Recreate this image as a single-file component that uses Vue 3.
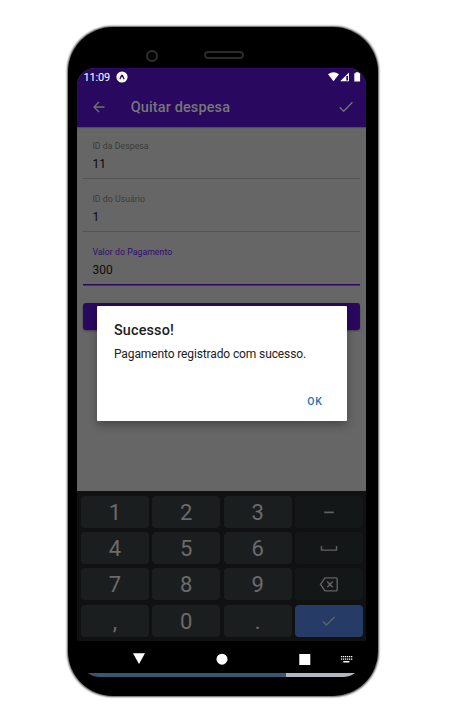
<script setup>
const fields = [
  { label: 'ID da Despesa', value: '11' },
  { label: 'ID do Usuário', value: '1' },
  { label: 'Valor do Pagamento', value: '300', focused: true },
]
const keys = ['1', '2', '3', 'minus', '4', '5', '6', 'space', '7', '8', '9', 'delete', ',', '0', '.', 'done']
const dots = [0, 1, 2, 3, 4, 5]
</script>

<template>
  <main class="page">
    <div class="phone">
      <div class="bezel">
        <span class="camera"></span>
        <span class="speaker"></span>
      </div>
      <div class="screen">
        <header class="top">
          <div class="status">
            <span class="clock">11:09</span>
            <svg class="expo" viewBox="0 0 12 12"><circle cx="6" cy="6" r="5.6" fill="#fff" /><path d="M4.1 7.7 5.6 4.4Q6 3.8 6.4 4.4L7.9 7.7" fill="none" stroke="#29085f" stroke-width="1.3" stroke-linecap="round" /></svg>
            <svg class="signals" viewBox="0 0 33 10">
              <path d="M0 2.2Q5.5-1.8 11 2.2L5.5 9.2Z" fill="#fff" />
              <path d="M12.2 9.3 21 .4V9.3Z" fill="#fff" />
              <path d="M18.3 4H20v4.5H18.3Z" fill="#29085f" />
              <path d="M27.6.3h3.2v1h1.3v8.2h-5.8V1.3h1.3Z" fill="#fff" />
            </svg>
          </div>
          <div class="appbar">
            <svg class="back" viewBox="0 0 12 12"><path d="M11.5 6H1M6 1 1 6l5 5" /></svg>
            <h1>Quitar despesa</h1>
            <svg class="confirm" viewBox="0 0 13 11"><path d="M.6 5.8 4.3 9.4 12.5 1" /></svg>
          </div>
        </header>
        <section class="form">
          <div v-for="f in fields" :key="f.label" class="field" :class="{ focused: f.focused }">
            <label>{{ f.label }}</label>
            <span class="value">{{ f.value }}</span>
          </div>
          <div class="submit"></div>
        </section>
        <section class="keyboard">
          <div v-for="k in keys" :key="k" class="key" :class="k.length > 1 ? k : (k === ',' || k === '.') ? 'mark' : ''">
            <svg v-if="k === 'minus'" class="glyph" viewBox="0 0 20 16"><path d="M5.2 8.4h9.6" /></svg>
            <svg v-else-if="k === 'space'" class="glyph" viewBox="0 0 20 16"><path d="M2.5 6v4.1h15V6" /></svg>
            <svg v-else-if="k === 'delete'" class="glyph" viewBox="0 0 20 16"><path d="M6 1.9h11.2q1 0 1 1v11q0 1-1 1H6L1.5 8.4ZM8.2 5.6l5.6 5.6M13.8 5.6l-5.6 5.6" /></svg>
            <svg v-else-if="k === 'done'" class="glyph" viewBox="0 0 20 16"><path d="M3.9 8.4 7.5 12.1 15.6 4" /></svg>
            <span v-else>{{ k }}</span>
          </div>
        </section>
        <div class="dialog">
          <h2>Sucesso!</h2>
          <p>Pagamento registrado com sucesso.</p>
          <button>OK</button>
        </div>
      </div>
      <nav class="nav">
        <svg viewBox="0 0 288 32">
          <path d="M55 12.2H67L61 23Z" />
          <circle cx="144" cy="18.2" r="5.5" />
          <path d="M221.3 13h11v11h-11Z" />
          <g v-for="d in dots" :key="d">
            <path :d="`M${263 + d * 2} 15h1.3v1.3h-1.3ZM${263 + d * 2} 17.4h1.3v1.3h-1.3Z`" />
          </g>
          <path d="M265.3 20h6v1.4h-6Z" />
        </svg>
      </nav>
      <div class="edge">
        <svg viewBox="0 0 288 4" preserveAspectRatio="none"><path d="M10 0H208V4H21Q14 3.4 10 0Z" fill="#385672" /><path d="M208 0h69q-4 3.6-11 4h-58Z" fill="#afb8c0" /></svg>
      </div>
    </div>
  </main>
</template>

<style>
body { background: #fff; overflow: hidden; }
</style>

<style scoped>
* { box-sizing: border-box; }
.page { width: 465px; height: 721px; padding: 27px 0 0 67.5px; background: #fff; font-family: Roboto, sans-serif; }
svg { display: block; }
.phone { width: 310.5px; height: 669px; padding: 0 12.3px 0 9.9px; background: #000; border-radius: 45px; box-shadow: 0 0 2px 0.4px #555; overflow: hidden; }
.bezel { display: flex; height: 41px; padding: 23px 0 0 68.3px; }
.camera { width: 12px; height: 12px; border: 2px solid #303030; border-radius: 50%; }
.speaker { width: 40px; height: 8px; margin: 1px 0 0 46.5px; border: 2px solid #2b2b2b; border-radius: 4px; }
.screen { position: relative; height: 573px; background: #666; border-radius: 18px 18px 0 0; overflow: hidden; }
.top { height: 59px; background: #29085f; box-shadow: 0 1px 1px rgba(0, 0, 0, .2); }
.status { display: flex; align-items: center; height: 19px; padding: 0 5px 0 6px; color: #fff; }
.clock { width: 33px; font-size: 11px; line-height: 19px; letter-spacing: -.15px; }
.expo { width: 12px; height: 12px; margin-top: -1px; }
.signals { width: 33px; height: 10px; margin: -1px 0 0 auto; }
.appbar { display: flex; align-items: center; height: 40px; padding: 0 13px 0 15.3px; color: #777; }
.appbar svg { fill: none; stroke: #707070; stroke-width: 1.35; }
.back { width: 12px; height: 12px; margin-top: -1px; }
.confirm { width: 14px; height: 12px; margin: -1px 0 0 auto; }
h1 { margin: 1px 0 0 26px; font-size: 14.5px; font-weight: 500; line-height: 20px; letter-spacing: .12px; }
.form { display: flex; flex-direction: column; height: 364px; padding: 0 6px; }
.field { display: flex; flex-direction: column; height: 53px; padding: 13px 9px 0; background: linear-gradient(#545454, #545454) 0 51px / 100% 1px no-repeat; }
.field label { font-size: 8.75px; line-height: 12px; color: #3c3c3c; letter-spacing: .03px; }
.field .value { margin-top: 4px; font-size: 12px; line-height: 16px; color: #0b0b0b; }
.field.focused { background: linear-gradient(#29085f, #29085f) 0 51px / 100% 1.5px no-repeat; }
.focused label { color: #300c70; }
.submit { height: 27px; margin-top: 17px; background: #29085f; border-radius: 3px; box-shadow: 0 1px 2px rgba(0, 0, 0, .35); }
.keyboard { display: grid; grid-template-columns: repeat(4, 68px); grid-auto-rows: 32px; gap: 4.4px 3.35px; height: 150px; padding: 4.5px 3.5px; background: #0f1112; }
.key { display: flex; align-items: center; justify-content: center; background: #1b1e1f; border-radius: 4px; color: #6b6b6b; font-size: 22px; line-height: 32px; }
.key span { padding-top: 2px; }
.mark span { padding-top: 3px; }
.minus, .space, .delete { background: #141718; }
.done { background: #263c66; }
.glyph { width: 20px; height: 16px; fill: none; stroke: #606263; stroke-width: 1.4; }
.minus .glyph { stroke-width: 1.7; }
.dialog { position: absolute; left: 19.6px; top: 238px; width: 250px; height: 115px; padding: 16px 17px 0; display: flex; flex-direction: column; background: #fff; border-radius: 1px; box-shadow: 0 4px 10px rgba(0, 0, 0, .3); color: #212121; }
h2 { margin: 0; font-size: 14.4px; font-weight: 500; line-height: 17px; letter-spacing: .15px; }
p { margin: 6px 0 0; font-size: 12px; line-height: 18px; letter-spacing: -.12px; white-space: nowrap; }
button { margin: 29px 7.5px 0 auto; padding: 0; border: 0; background: none; color: #1b75b0; font: 500 10.5px/20px Roboto, sans-serif; letter-spacing: .7px; }
.nav { height: 32px; }
.nav svg { width: 288px; height: 32px; margin-left: .6px; fill: #fff; }
.edge svg { width: 288px; height: 4px; margin-left: .6px; }
</style>
